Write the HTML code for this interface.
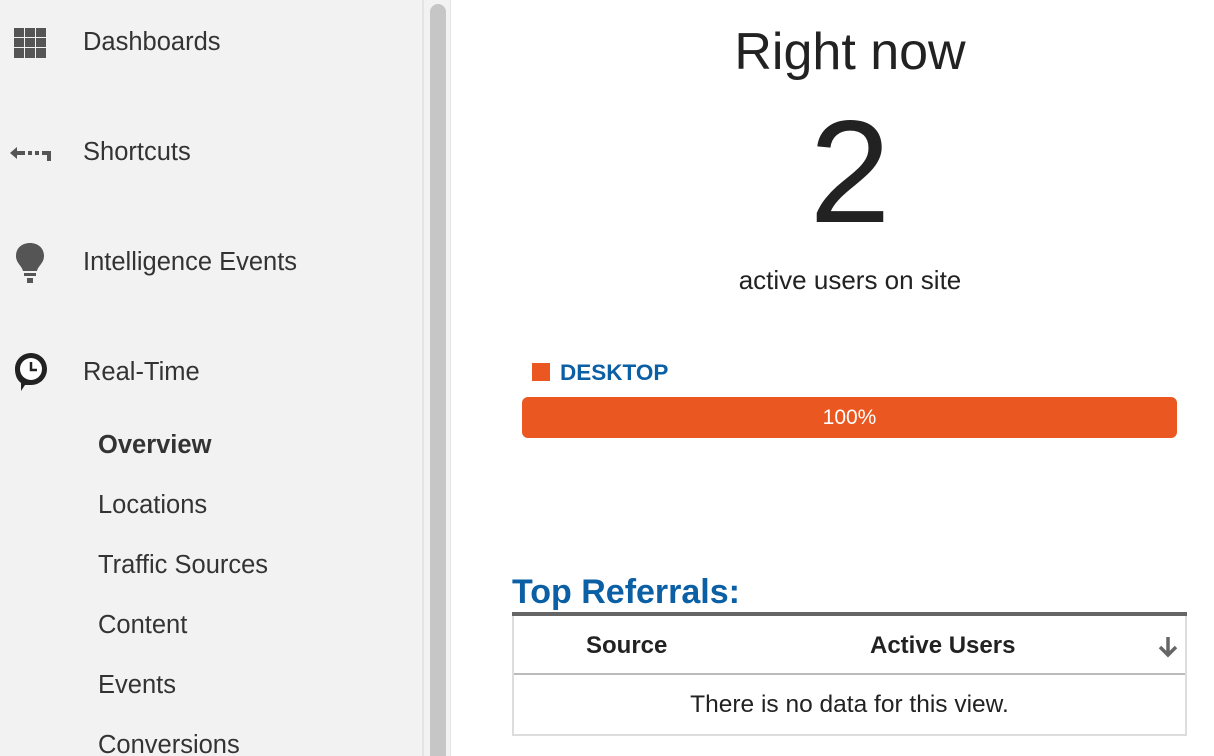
<!DOCTYPE html>
<html><head><style>
html,body{margin:0;width:1214px;height:756px;overflow:hidden}
body{background:#fff;font-family:"Liberation Sans",Arial,sans-serif;position:relative}
.a{position:absolute;white-space:nowrap}
.side{position:absolute;left:0;top:0;width:422px;height:756px;background:#f2f2f2;border-right:2px solid #e4e4e4}
.sb{position:absolute;left:424px;top:0;width:26px;height:756px;background:#f2f2f2;border-right:1px solid #e4e4e4}
.thumb{position:absolute;left:430px;top:4px;width:16px;height:752px;background:#c6c6c6;border-radius:8px 8px 0 0}
.it{font-size:25.5px;color:#333;line-height:30px}
.sub{font-size:25.5px;color:#333;line-height:30px;left:98px}
</style></head><body>
<div class="side"></div><div class="sb"></div><div class="thumb"></div>
<svg class="a" style="left:13px;top:27px" width="34" height="32" viewBox="0 0 34 32" fill="#555">
<rect x="1" y="1" width="10" height="9"/><rect x="12" y="1" width="10" height="9"/><rect x="23" y="1" width="10" height="9"/>
<rect x="1" y="11" width="10" height="9"/><rect x="12" y="11" width="10" height="9"/><rect x="23" y="11" width="10" height="9"/>
<rect x="1" y="21" width="10" height="10"/><rect x="12" y="21" width="10" height="10"/><rect x="23" y="21" width="10" height="10"/></svg>
<svg class="a" style="left:9px;top:143px" width="44" height="20" viewBox="0 0 44 20" fill="#555">
<path d="M1 10 L8 4 L8 8 L16 8 L16 12 L8 12 L8 16 Z"/><rect x="19" y="8" width="4" height="4"/><rect x="26" y="8" width="4" height="4"/><rect x="33" y="8" width="9" height="4"/><rect x="38" y="8" width="4" height="10"/></svg>
<svg class="a" style="left:14px;top:242px" width="32" height="42" viewBox="0 0 32 42" fill="#555">
<path d="M16 1 C24 1 30 6 30 14 C30 21 24 24 23 29 L9 29 C8 24 2 21 2 14 C2 6 8 1 16 1 Z"/><rect x="10" y="31" width="12" height="3"/><rect x="13" y="36" width="6" height="5"/></svg>
<svg class="a" style="left:13px;top:351px" width="36" height="42" viewBox="0 0 36 42">
<path d="M18 2 C27 2 34 9 34 18 C34 27 27 34 18 34 L12 34 L8 40 L8 32 C4 29 2 24 2 18 C2 9 9 2 18 2 Z" fill="#222"/>
<circle cx="18" cy="18" r="11" fill="#fff"/><path d="M18 11 L18 19 L24 19" stroke="#222" stroke-width="2.5" fill="none"/></svg>
<div class="a it" style="left:83px;top:27px">Dashboards</div>
<div class="a it" style="left:83px;top:137px">Shortcuts</div>
<div class="a it" style="left:83px;top:247px">Intelligence Events</div>
<div class="a it" style="left:83px;top:357px">Real-Time</div>
<div class="a sub" style="top:430px;font-weight:bold">Overview</div>
<div class="a sub" style="top:490px">Locations</div>
<div class="a sub" style="top:550px">Traffic Sources</div>
<div class="a sub" style="top:610px">Content</div>
<div class="a sub" style="top:670px">Events</div>
<div class="a sub" style="top:730px">Conversions</div>

<div class="a" style="left:450px;width:800px;text-align:center;top:23px;font-size:52px;line-height:58px;color:#222">Right now</div>
<div class="a" style="left:450px;width:800px;text-align:center;top:92px;font-size:146px;line-height:160px;color:#222">2</div>
<div class="a" style="left:450px;width:800px;text-align:center;top:265px;font-size:26px;line-height:30px;color:#222">active users on site</div>
<div class="a" style="left:532px;top:363px;width:18px;height:18px;background:#eb5720"></div>
<div class="a" style="left:560px;top:360px;font-size:22.5px;font-weight:bold;color:#0b5fa5;line-height:25px">DESKTOP</div>
<div class="a" style="left:522px;top:397px;width:655px;height:41px;background:#eb5720;border-radius:6px;color:#fff;font-size:21px;line-height:41px;text-align:center">100%</div>
<div class="a" style="left:512px;top:573px;font-size:34px;font-weight:bold;color:#0b5fa5;line-height:38px">Top Referrals:</div>
<div class="a" style="left:512px;top:612px;width:675px;height:4px;background:#666"></div>
<div class="a" style="left:512px;top:616px;width:671px;height:118px;border:2px solid #ddd;border-top:none"></div>
<div class="a" style="left:514px;top:673px;width:671px;height:2px;background:#bbb"></div>
<div class="a" style="left:586px;top:632px;font-size:24px;font-weight:bold;color:#222;line-height:28px">Source</div>
<div class="a" style="left:870px;top:632px;font-size:24px;font-weight:bold;color:#222;line-height:28px">Active Users</div>
<svg class="a" style="left:1157px;top:635px" width="22" height="24" viewBox="0 0 22 24"><path d="M11 2 L11 20 M3 12 L11 20 L19 12" stroke="#666" stroke-width="3.5" fill="none"/></svg>
<div class="a" style="left:514px;width:671px;text-align:center;top:691px;font-size:24.5px;color:#222;line-height:28px">There is no data for this view.</div>
</body></html>
